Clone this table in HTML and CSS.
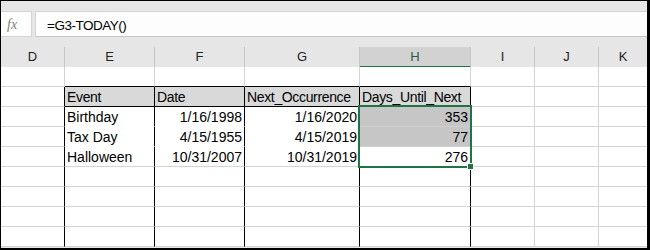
FILE: index.html
```html
<!DOCTYPE html>
<html>
<head>
<meta charset="utf-8" />
<title>Book1 - Excel</title>
<link rel="stylesheet" href="styles.css">
</head>
<body>
<div class="window">
	<div class="formula-bar">
		<div class="fx">fx</div>
		<div class="formula">=G3-TODAY()</div>
	</div>
	<div class="heads">
		<div class="ch">D</div>
		<div class="ch">E</div>
		<div class="ch">F</div>
		<div class="ch">G</div>
		<div class="ch on">H</div>
		<div class="ch">I</div>
		<div class="ch">J</div>
		<div class="ch">K</div>
	</div>
	<div class="grid">
		<!-- row 1 -->
		<div class="row">
			<div class="c"></div>
			<div class="c top"></div>
			<div class="c top"></div>
			<div class="c top"></div>
			<div class="c top"></div>
			<div class="c"></div>
			<div class="c"></div>
			<div class="c"></div>
		</div>
		<!-- row 2: table header -->
		<div class="row">
			<div class="c b"></div>
			<div class="c b th">Event</div>
			<div class="c b th">Date</div>
			<div class="c b th">Next_Occurrence</div>
			<div class="c b th">Days_Until_Next</div>
			<div class="c"></div>
			<div class="c"></div>
			<div class="c"></div>
		</div>
		<div class="row">
			<div class="c b"></div>
			<div class="c b nb">Birthday</div>
			<div class="c b nb num">1/16/1998</div>
			<div class="c b nb num">1/16/2020</div>
			<div class="c b num hl">353</div>
			<div class="c"></div>
			<div class="c"></div>
			<div class="c"></div>
		</div>
		<div class="row">
			<div class="c b"></div>
			<div class="c b nb">Tax Day</div>
			<div class="c b nb num">4/15/1955</div>
			<div class="c b nb num">4/15/2019</div>
			<div class="c b num hl">77</div>
			<div class="c"></div>
			<div class="c"></div>
			<div class="c"></div>
		</div>
		<div class="row">
			<div class="c b"></div>
			<div class="c b">Halloween</div>
			<div class="c b num">10/31/2007</div>
			<div class="c b num">10/31/2019</div>
			<div class="c b num">276</div>
			<div class="c"></div>
			<div class="c"></div>
			<div class="c"></div>
		</div>
		<div class="row">
			<div class="c b"></div><div class="c b"></div><div class="c b"></div><div class="c b"></div><div class="c b"></div>
			<div class="c"></div><div class="c"></div><div class="c"></div>
		</div>
		<div class="row">
			<div class="c b"></div><div class="c b"></div><div class="c b"></div><div class="c b"></div><div class="c b"></div>
			<div class="c"></div><div class="c"></div><div class="c"></div>
		</div>
		<div class="row">
			<div class="c b"></div><div class="c b"></div><div class="c b"></div><div class="c b"></div><div class="c b"></div>
			<div class="c"></div><div class="c"></div><div class="c"></div>
		</div>
		<div class="row">
			<div class="c b"></div><div class="c b"></div><div class="c b"></div><div class="c b"></div><div class="c b"></div>
			<div class="c"></div><div class="c"></div><div class="c"></div>
		</div>
		<!-- selected range H3:H5 -->
		<div class="sel-box"><span class="handle"></span></div>
	</div>
</div>
</body>
</html>
```

FILE: styles.css
```css
*{margin:0;padding:0;box-sizing:border-box;}
body{background:#fff;}
.window{
	width:650px;
	height:250px;
	overflow:hidden;
	border-style:solid;
	border-color:#000;
	border-width:1px 3px 2px 1px;
	background:#e6e6e6;
	font-family:"Liberation Sans",Arial,sans-serif;
	color:#000;
}

/* formula bar */
.formula-bar{
	display:flex;
	gap:3px;
	height:26px;
	margin:10px 0;
}
.fx{
	width:31px;
	border:1px solid #d4d4d4;
	border-left:none;
	background:#fdfdfd;
	font:italic 14px "Liberation Serif",serif;
	color:#808080;
	padding-left:6px;
	line-height:25px;
}
.formula{
	flex:1;
	border:1px solid #d4d4d4;
	border-right:none;
	border-bottom-color:#c6c6c6;
	background:#fdfdfd;
	font-size:13.5px;
	letter-spacing:-0.5px;
	padding-left:11px;
	line-height:27px;
}

/* column letters */
.heads,
.row{
	display:grid;
	grid-template-columns:64px 90px 90px 115px 111px 64px 64px 48px;
	height:20px;
}
.ch{
	border-right:1px solid #c6c6c6;
	border-bottom:1px solid #ababab;
	text-align:center;
	font-size:13px;
	line-height:19px;
	color:#222;
}
.ch:last-child{border-right:none;}
.ch.on{
	background:#d2d2d2;
	border-bottom:2px solid #217346;
	color:#2b5a3e;
}

/* cells */
.grid{position:relative;background:#fff;}
.c{
	border-right:1px solid #d4d4d4;
	border-bottom:1px solid #d4d4d4;
	background:#fff;
	font-size:14px;
	line-height:21px;
	padding:0 2px;
	white-space:nowrap;
	overflow:hidden;
}
.c:last-child{border-right:none;}
.c.top{border-bottom-color:#000;}
.c.b{border-right-color:#000;}
.c.th{background:#d9d9d9;border-bottom-color:#000;letter-spacing:-0.35px;}
.c.nb{border-bottom-color:#fff;}
.c.num{text-align:right;}
.c.hl{background:#c6c6c6;border-bottom-color:#cfcfcf;}

.sel-box{
	position:absolute;
	left:357px;
	top:38px;
	width:114px;
	height:63px;
	border:2px solid #217346;
}
.handle{
	position:absolute;
	right:-4px;
	bottom:-4px;
	width:7px;
	height:7px;
	background:#217346;
	border:1px solid #fff;
}
```
